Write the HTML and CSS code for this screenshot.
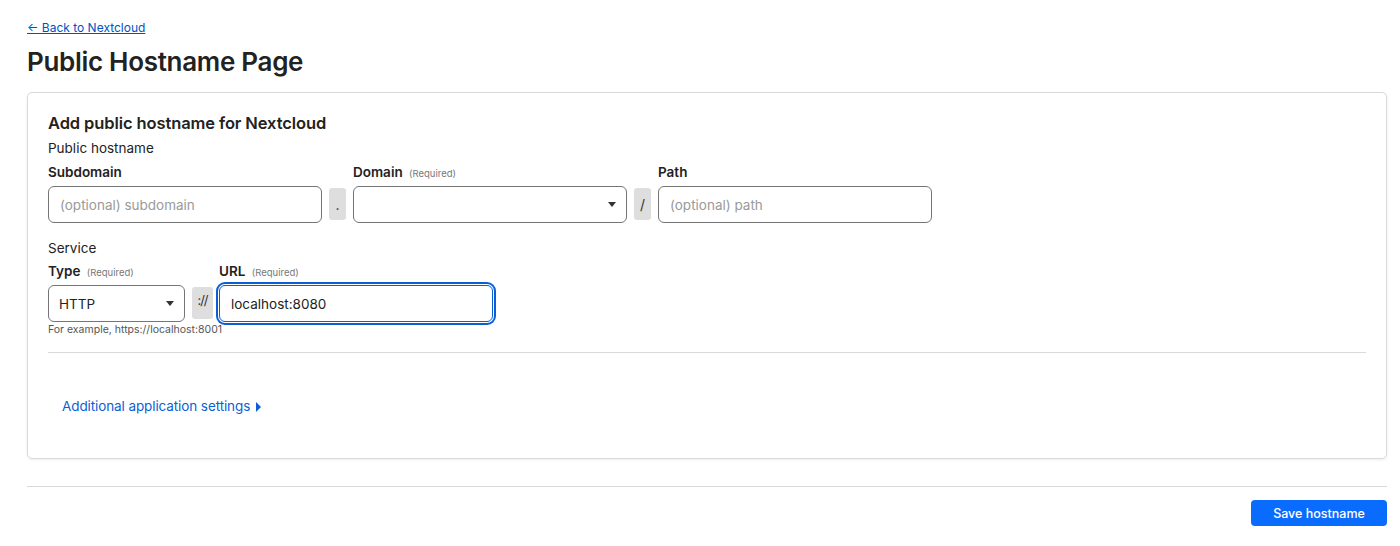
FILE: index.html
```
<!DOCTYPE html>
<html lang="en">
<head>
    <meta charset="UTF-8">
    <title>Public Hostname Page</title>
    <link rel="stylesheet" href="styles.css">
</head>
<body>
<div class="page">
    <a class="backLink" href="#">&larr; Back to Nextcloud</a>
    <h1 class="title">Public Hostname Page</h1>

    <div class="card">
        <h2 class="cardTitle">Add public hostname for Nextcloud</h2>
        <div class="groupLabel">Public hostname</div>
        <div class="fieldRow">
            <div class="field wide">
                <label for="subdomain">Subdomain</label>
                <input type="text" id="subdomain" placeholder="(optional) subdomain">
            </div>
            <span class="sep">.</span>
            <div class="field wide">
                <label for="domain">Domain <span class="required">(Required)</span></label>
                <div class="select"><span class="value"></span><span class="arrow"></span></div>
            </div>
            <span class="sep">/</span>
            <div class="field wide">
                <label for="path">Path</label>
                <input type="text" id="path" placeholder="(optional) path">
            </div>
        </div>

        <div class="groupLabel service">Service</div>
        <div class="fieldRow second">
            <div class="field narrow">
                <label>Type <span class="required">(Required)</span></label>
                <div class="select"><span class="value">HTTP</span><span class="arrow"></span></div>
            </div>
            <span class="sep proto">://</span>
            <div class="field url">
                <label for="url">URL <span class="required">(Required)</span></label>
                <input type="text" id="url" class="focused" value="localhost:8080">
            </div>
        </div>
        <div class="hint">For example, https://localhost:8001</div>

        <hr class="divider">

        <a class="moreLink" href="#">Additional application settings <span class="caret"></span></a>
    </div>

    <hr class="pageDivider">
    <div class="actions">
        <button class="saveBtn">Save hostname</button>
    </div>
</div>
</body>
</html>
```
FILE: styles.css
```
* {
    box-sizing: border-box;
}

body {
    margin: 0;
    font-family: Inter, "Noto Sans", sans-serif;
    color: #222;
    background: #fff;
}

.page {
    padding: 16px 13px 0 27px;
}

.backLink {
    display: inline-block;
    font-size: 12px;
    line-height: 16px;
    color: #0051c3;
    text-decoration: underline;
}

.title {
    margin: 10px 0 14px 0;
    font-size: 26px;
    line-height: 32px;
    font-weight: 600;
    letter-spacing: -0.3px;
    color: #222;
}

.card {
    border: 1px solid #d9d9d9;
    border-radius: 5px;
    box-shadow: 0 1px 3px rgba(0, 0, 0, 0.08);
    padding: 19px 20px 43px 20px;
}

.cardTitle {
    margin: 0;
    font-size: 16.5px;
    line-height: 22px;
    font-weight: 600;
    letter-spacing: -0.1px;
}

.groupLabel {
    margin-top: 5px;
    font-size: 13.5px;
    line-height: 18px;
}

.groupLabel.service {
    margin-top: 16px;
}

.fieldRow {
    display: flex;
    align-items: flex-end;
    gap: 7px;
    margin-top: 6px;
}

.fieldRow.second {
    margin-top: 5px;
}

.field {
    display: flex;
    flex-direction: column;
}

.field.wide {
    width: 274px;
}

.field.narrow {
    width: 137px;
}

.field.url {
    width: 274px;
    margin-left: -1px;
}

label {
    display: block;
    height: 18px;
    font-size: 13.5px;
    line-height: 18px;
    font-weight: 600;
    margin-bottom: 5px;
}

.required {
    font-size: 9.5px;
    line-height: 1;
    font-weight: 400;
    color: #777;
    margin-left: 3px;
}

input[type=text], .select {
    height: 37px;
    width: 100%;
    border: 1px solid #757575;
    border-radius: 6px;
    padding: 0 11px;
    font-family: Inter, "Noto Sans", sans-serif;
    font-size: 13.5px;
    color: #222;
    background: #fff;
}

input::placeholder {
    color: #9a9a9a;
}

input.focused {
    border-color: #0a5fd6;
    box-shadow: 0 0 0 1px #fff, 0 0 0 3px #0a5fd6;
    outline: none;
}

.select {
    display: flex;
    align-items: center;
    justify-content: space-between;
    padding: 0 10px;
}

.arrow {
    width: 0;
    height: 0;
    border-left: 4px solid transparent;
    border-right: 4px solid transparent;
    border-top: 5px solid #333;
}

.sep {
    display: flex;
    align-items: center;
    justify-content: center;
    width: 17px;
    height: 32px;
    margin-bottom: 3px;
    background: #dedede;
    border-radius: 3px;
    font-size: 14px;
    color: #333;
}

.sep.proto {
    width: 21px;
    font-size: 13px;
    letter-spacing: -1px;
    align-items: flex-start;
    padding-top: 5px;
}

.hint {
    font-size: 10.5px;
    line-height: 14px;
    color: #555;
    margin-top: 1px;
}

.divider {
    border: none;
    border-top: 1px solid #dadada;
    margin: 15px 0 0 0;
}

.moreLink {
    display: inline-block;
    margin: 44px 0 0 14px;
    font-size: 13.5px;
    line-height: 18px;
    letter-spacing: -0.1px;
    color: #0a5fd6;
    text-decoration: none;
}

.caret {
    display: inline-block;
    width: 0;
    height: 0;
    margin-left: 2px;
    border-top: 5px solid transparent;
    border-bottom: 5px solid transparent;
    border-left: 5px solid #0a5fd6;
    vertical-align: -1px;
}

.pageDivider {
    border: none;
    border-top: 1px solid #dadada;
    margin: 27px 0 0 0;
}

.actions {
    display: flex;
    justify-content: flex-end;
    margin-top: 13px;
}

.saveBtn {
    width: 136px;
    height: 26px;
    border: none;
    border-radius: 4px;
    background: #0a6cff;
    color: #fff;
    font-family: Inter, "Noto Sans", sans-serif;
    font-size: 12.5px;
    font-weight: 500;
}
```
